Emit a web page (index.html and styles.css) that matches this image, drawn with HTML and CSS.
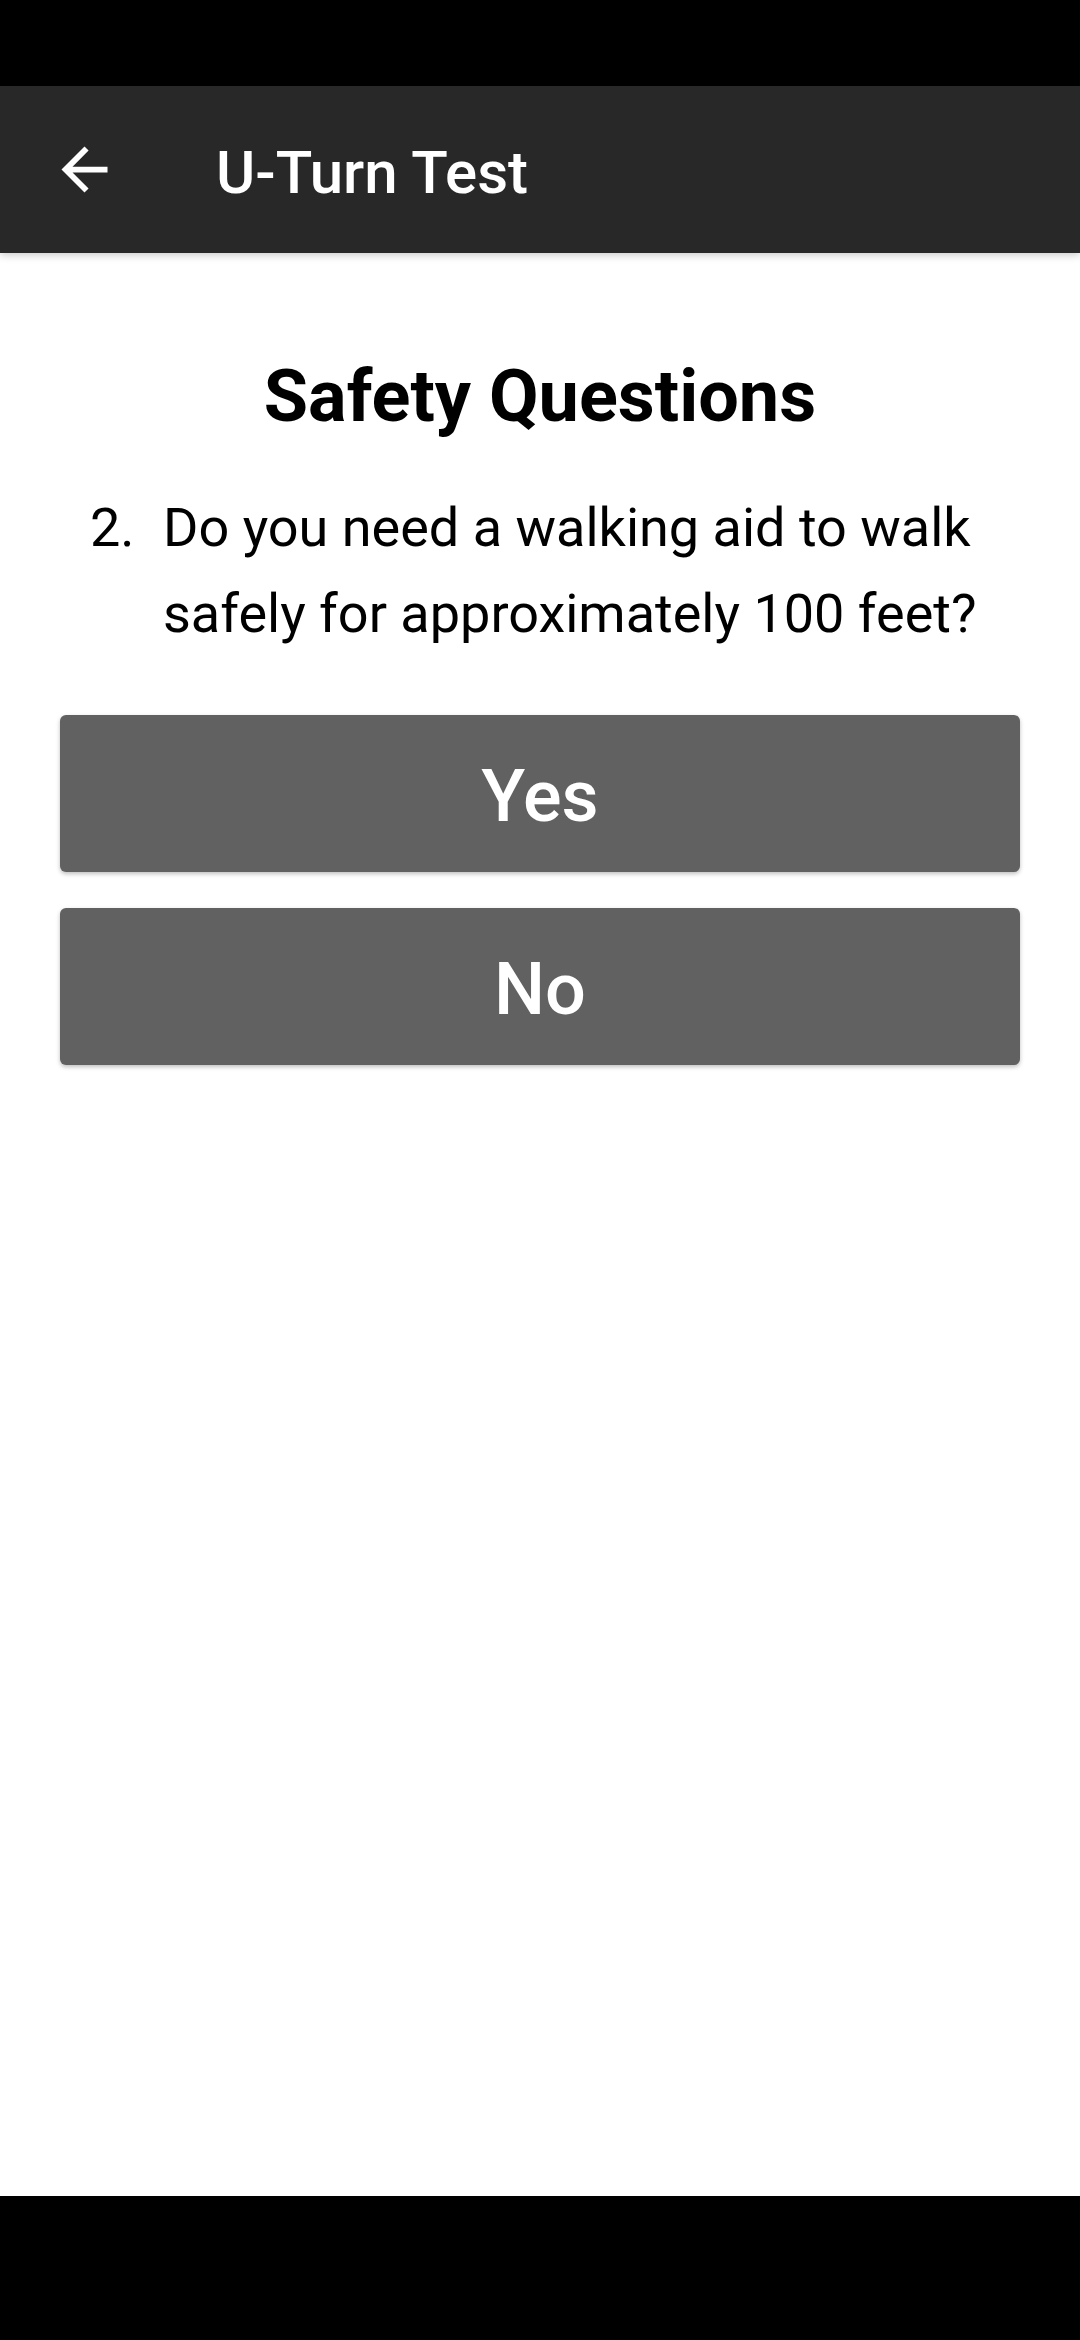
FILE: index.html
```html
<!DOCTYPE html>
<html lang="en">
<head>
<meta charset="utf-8">
<title>U-Turn Test</title>
<link rel="stylesheet" href="styles.css">
</head>
<body>
<div class="screen">
  <div class="status-bar"></div>
  <header class="app-bar">
    <svg class="back-icon" viewBox="0 0 24 24" aria-hidden="true">
      <path d="M20 11H7.83l5.59-5.59L12 4l-8 8 8 8 1.41-1.41L7.83 13H20v-2z" fill="#ffffff"/>
    </svg>
    <h1 class="app-title">U-Turn Test</h1>
  </header>
  <main class="content">
    <h2 class="section-title">Safety Questions</h2>
    <div class="question">
      <span class="q-number">2.</span>
      <span class="q-text">Do you need a walking aid to walk safely for approximately 100 feet?</span>
    </div>
    <div class="answers">
      <button class="answer-btn">Yes</button>
      <button class="answer-btn">No</button>
    </div>
  </main>
  <div class="nav-bar"></div>
</div>
</body>
</html>
```

FILE: styles.css
```css
html, body {
  margin: 0;
  padding: 0;
  background: #ffffff;
}

.screen {
  width: 1080px;
  height: 2340px;
  display: flex;
  flex-direction: column;
  font-family: Roboto, "Noto Sans", "Liberation Sans", sans-serif;
  color: #000000;
  overflow: hidden;
}

.status-bar {
  height: 86px;
  background: #000000;
  flex: none;
}

.app-bar {
  height: 167px;
  flex: none;
  background: #282828;
  display: flex;
  align-items: center;
  padding-left: 50px;
  box-shadow: 0 2px 8px rgba(0, 0, 0, 0.22);
  position: relative;
  z-index: 1;
}

.back-icon {
  width: 69px;
  height: 69px;
  flex: none;
}

.app-title {
  margin: 6px 0 0 97px;
  font-size: 60px;
  line-height: 70px;
  font-weight: 500;
  color: #ffffff;
}

.content {
  flex: 1;
  padding: 102px 60px 0;
  display: flex;
  flex-direction: column;
}

.section-title {
  margin: 0;
  text-align: center;
  font-size: 72px;
  line-height: 84px;
  font-weight: 700;
}

.question {
  margin-top: 46px;
  padding-left: 30px;
  display: grid;
  grid-template-columns: 73px 1fr;
  font-size: 54px;
  line-height: 86px;
  font-weight: 400;
}

.answers {
  margin-top: 58px;
  display: flex;
  flex-direction: column;
  gap: 36px;
}

.answer-btn {
  height: 157px;
  border: none;
  border-radius: 6px;
  background: #616161;
  color: #ffffff;
  font-family: Roboto, "Noto Sans", "Liberation Sans", sans-serif;
  font-size: 72px;
  font-weight: 500;
  padding: 0;
  padding-top: 6px;
  box-shadow: 0 2px 4px rgba(0, 0, 0, 0.25);
}

.nav-bar {
  height: 144px;
  flex: none;
  background: #000000;
}
```
